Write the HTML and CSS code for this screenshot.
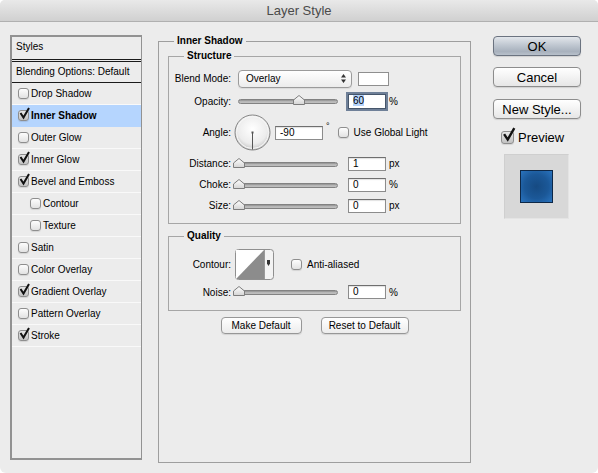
FILE: index.html
```html
<!DOCTYPE html>
<html lang="en">
<head>
    <meta charset="UTF-8">
    <meta name="viewport" content="width=device-width, initial-scale=1.0">
    <title>Layer Style</title>
    <link rel="stylesheet" href="styles.css">
</head>
<body>
    <div class="window">
        <div class="titlebar">Layer Style</div>

        <div class="content">
            <!-- left: list of effects -->
            <div class="styles-list">
                <div class="list-head">Styles</div>
                <div class="list-blend">Blending Options: Default</div>
                <div class="list-item"><span class="cb"></span>Drop Shadow</div>
                <div class="list-item selected"><span class="cb on"><svg class="tick" width="14" height="15" viewBox="0 0 14 15"><path d="M2.5 6 L5.5 10.5 L11 1" fill="none" stroke="#111" stroke-width="2"/></svg></span><b>Inner Shadow</b></div>
                <div class="list-item"><span class="cb"></span>Outer Glow</div>
                <div class="list-item"><span class="cb on"><svg class="tick" width="14" height="15" viewBox="0 0 14 15"><path d="M2.5 6 L5.5 10.5 L11 1" fill="none" stroke="#111" stroke-width="2"/></svg></span>Inner Glow</div>
                <div class="list-item"><span class="cb on"><svg class="tick" width="14" height="15" viewBox="0 0 14 15"><path d="M2.5 6 L5.5 10.5 L11 1" fill="none" stroke="#111" stroke-width="2"/></svg></span>Bevel and Emboss</div>
                <div class="list-item sub"><span class="cb"></span>Contour</div>
                <div class="list-item sub"><span class="cb"></span>Texture</div>
                <div class="list-item"><span class="cb"></span>Satin</div>
                <div class="list-item"><span class="cb"></span>Color Overlay</div>
                <div class="list-item"><span class="cb on"><svg class="tick" width="14" height="15" viewBox="0 0 14 15"><path d="M2.5 6 L5.5 10.5 L11 1" fill="none" stroke="#111" stroke-width="2"/></svg></span>Gradient Overlay</div>
                <div class="list-item"><span class="cb"></span>Pattern Overlay</div>
                <div class="list-item"><span class="cb on"><svg class="tick" width="14" height="15" viewBox="0 0 14 15"><path d="M2.5 6 L5.5 10.5 L11 1" fill="none" stroke="#111" stroke-width="2"/></svg></span>Stroke</div>
            </div>

            <!-- middle: effect settings -->
            <fieldset class="effect-panel">
                <legend>Inner Shadow</legend>

                <fieldset class="group structure">
                    <legend>Structure</legend>

                    <div class="field-row row-blend">
                        <span class="lbl">Blend Mode:</span>
                        <div class="select">
                            <span>Overlay</span>
                            <svg width="5" height="9" viewBox="0 0 5 9"><path d="M0 3.5 L2.5 0 L5 3.5 Z M0 5.5 L2.5 9 L5 5.5 Z" fill="#333"/></svg>
                        </div>
                        <span class="color-swatch"></span>
                    </div>

                    <div class="field-row row-opacity">
                        <span class="lbl">Opacity:</span>
                        <div class="slider">
                            <span class="track"></span>
                            <svg class="thumb" style="left: calc(60% - 5px)" width="12" height="10" viewBox="0 0 12 10">
                                <defs>
                                    <linearGradient id="thumbg" x1="0" y1="0" x2="0" y2="1">
                                        <stop offset="0" stop-color="#ffffff"/>
                                        <stop offset="1" stop-color="#d4d4d4"/>
                                    </linearGradient>
                                </defs>
                                <path d="M0.5 9.5 V5 L6 0.5 L11.5 5 V9.5 Z" fill="url(#thumbg)" stroke="#7d7d7d"/>
                            </svg>
                        </div>
                        <span class="num focus"><span class="sel">60</span></span>
                        <span class="unit">%</span>
                    </div>

                    <div class="field-row row-angle">
                        <span class="lbl">Angle:</span>
                        <svg class="dial" width="37" height="37" viewBox="0 0 37 37">
                            <defs>
                                <radialGradient id="dialg" cx="0.5" cy="0.4" r="0.6">
                                    <stop offset="0" stop-color="#ffffff"/>
                                    <stop offset="0.7" stop-color="#ececec"/>
                                    <stop offset="1" stop-color="#c4c4c4"/>
                                </radialGradient>
                            </defs>
                            <circle cx="18.5" cy="18.5" r="17.5" fill="url(#dialg)" stroke="#858585"/>
                            <circle cx="18.5" cy="18.5" r="16" fill="none" stroke="#f7f7f7"/>
                            <line x1="18.5" y1="18.5" x2="18.5" y2="35.5" stroke="#555"/>
                            <rect x="17.5" y="17.5" width="2" height="2" fill="#555"/>
                        </svg>
                        <span class="num wide">-90</span>
                        <span class="deg">°</span>
                        <span class="cb"></span>
                        <span class="cb-label">Use Global Light</span>
                    </div>

                    <div class="field-row row-slider">
                        <span class="lbl">Distance:</span>
                        <div class="slider">
                            <span class="track"></span>
                            <svg class="thumb" style="left: calc(0% - 5px)" width="12" height="10" viewBox="0 0 12 10"><path d="M0.5 9.5 V5 L6 0.5 L11.5 5 V9.5 Z" fill="url(#thumbg)" stroke="#7d7d7d"/></svg>
                        </div>
                        <span class="num">1</span>
                        <span class="unit">px</span>
                    </div>

                    <div class="field-row row-slider">
                        <span class="lbl">Choke:</span>
                        <div class="slider">
                            <span class="track"></span>
                            <svg class="thumb" style="left: calc(0% - 5px)" width="12" height="10" viewBox="0 0 12 10"><path d="M0.5 9.5 V5 L6 0.5 L11.5 5 V9.5 Z" fill="url(#thumbg)" stroke="#7d7d7d"/></svg>
                        </div>
                        <span class="num">0</span>
                        <span class="unit">%</span>
                    </div>

                    <div class="field-row row-slider">
                        <span class="lbl">Size:</span>
                        <div class="slider">
                            <span class="track"></span>
                            <svg class="thumb" style="left: calc(0% - 5px)" width="12" height="10" viewBox="0 0 12 10"><path d="M0.5 9.5 V5 L6 0.5 L11.5 5 V9.5 Z" fill="url(#thumbg)" stroke="#7d7d7d"/></svg>
                        </div>
                        <span class="num">0</span>
                        <span class="unit">px</span>
                    </div>
                </fieldset>

                <fieldset class="group quality">
                    <legend>Quality</legend>

                    <div class="field-row row-contour">
                        <span class="lbl">Contour:</span>
                        <svg class="contour" width="39" height="31" viewBox="0 0 39 31">
                            <rect x="0.5" y="0.5" width="38" height="30" rx="3" fill="#f3f3f3" stroke="#8f8f8f"/>
                            <rect x="1" y="1" width="28" height="29" fill="#fff"/>
                            <path d="M1 30 L29 1 V30 Z" fill="#8c8c8c"/>
                            <line x1="29.5" y1="1" x2="29.5" y2="30" stroke="#9a9a9a"/>
                            <path d="M32 11 H35 V14.5 L33.5 17 L32 14.5 Z" fill="#333"/>
                        </svg>
                        <span class="cb"></span>
                        <span class="cb-label">Anti-aliased</span>
                    </div>

                    <div class="field-row row-slider row-noise">
                        <span class="lbl">Noise:</span>
                        <div class="slider">
                            <span class="track"></span>
                            <svg class="thumb" style="left: calc(0% - 5px)" width="12" height="10" viewBox="0 0 12 10"><path d="M0.5 9.5 V5 L6 0.5 L11.5 5 V9.5 Z" fill="url(#thumbg)" stroke="#7d7d7d"/></svg>
                        </div>
                        <span class="num">0</span>
                        <span class="unit">%</span>
                    </div>
                </fieldset>

                <div class="defaults">
                    <button class="btn-small make-default">Make Default</button>
                    <button class="btn-small reset-default">Reset to Default</button>
                </div>
            </fieldset>

            <!-- right: dialog buttons and preview -->
            <div class="side">
                <button class="btn default">OK</button>
                <button class="btn">Cancel</button>
                <button class="btn new-style">New Style...</button>
                <div class="preview-check">
                    <span class="cb big on"><svg class="tick" width="17" height="18" viewBox="0 0 14 15"><path d="M2.5 6 L5.5 10.5 L11 1" fill="none" stroke="#111" stroke-width="2"/></svg></span>
                    <span>Preview</span>
                </div>
                <div class="preview-box">
                    <div class="preview-swatch"></div>
                </div>
            </div>
        </div>
    </div>
</body>
</html>
```

FILE: styles.css
```css
* {
    box-sizing: border-box;
}

body {
    margin: 0;
    background-color: #fff;
    font-family: "Liberation Sans", Arial, sans-serif;
    font-size: 10px;
    color: #000;
}

.window {
    width: 598px;
    height: 473px;
    background-color: #ececec;
    border-radius: 5px 5px 6px 6px;
    overflow: hidden;
}

.titlebar {
    height: 22px;
    line-height: 21px;
    text-align: center;
    font-size: 13px;
    color: #4a4a4a;
    background: linear-gradient(#e9e9e9, #d0d0d0);
    border-bottom: 1px solid #b0b0b0;
}

.content {
    display: flex;
    align-items: flex-start;
    padding: 13px 0 0 10px;
}

/* effects list */

.styles-list {
    width: 132px;
    height: 425px;
    border: 2px solid #929292;
    border-right-width: 1px;
    flex-shrink: 0;
}

.list-head {
    height: 25px;
    line-height: 20px;
    padding-left: 4px;
    border-bottom: 3px double #1a1a1a;
}

.list-blend {
    height: 21px;
    line-height: 20px;
    padding-left: 4px;
    border-bottom: 1px solid #1a1a1a;
}

.list-item {
    display: flex;
    align-items: center;
    height: 22px;
    padding-left: 6px;
    border-bottom: 1px solid #f9f9f9;
}

.list-item .cb {
    margin-right: 2px;
}

.list-item.sub {
    padding-left: 18px;
}

.list-item.selected {
    background-color: #b5d5fe;
    border-bottom-color: #b5d5fe;
}

/* checkboxes */

.cb {
    position: relative;
    display: inline-block;
    flex-shrink: 0;
    width: 11px;
    height: 11px;
    border: 1px solid #8e8e8e;
    border-radius: 3px;
    background: linear-gradient(#fdfdfd, #e2e2e2);
    box-shadow: 0 1px 1px rgba(0, 0, 0, 0.1);
}

.cb.on {
    background: linear-gradient(#e6e6e6, #c2c2c2);
}

.cb .tick {
    position: absolute;
    left: -1px;
    top: -4px;
}

.cb.big {
    width: 13px;
    height: 13px;
}

.cb.big .tick {
    top: -5px;
}

.cb-label {
    margin-left: 5px;
}

/* group boxes */

fieldset {
    margin: 0;
    padding: 0;
    min-width: 0;
    border: 1px solid #a3a3a3;
}

legend {
    margin-left: 15px;
    padding: 0 3px;
    line-height: 12px;
    font-weight: bold;
}

.effect-panel {
    margin-left: 16px;
    width: 313px;
    height: 428px;
    flex-shrink: 0;
    border-color: #9e9e9e;
}

.group {
    margin: 3px 9px 0;
    border-color: #a6a6a6;
}

.structure {
    padding: 5px 0 7px;
}

.quality {
    margin-top: 6px;
    padding: 7px 0 7px;
}

.field-row {
    display: flex;
    align-items: center;
}

.field-row .lbl {
    width: 62px;
    margin-right: 7px;
    text-align: right;
    flex-shrink: 0;
}

.row-blend {
    height: 23px;
}

.row-opacity {
    height: 22px;
}

.row-angle {
    height: 41px;
}

.row-slider {
    height: 21px;
}

.row-contour {
    height: 30px;
}

.row-noise {
    margin-top: 2px;
    height: 22px;
}

.select {
    display: flex;
    align-items: center;
    justify-content: space-between;
    width: 114px;
    height: 18px;
    padding: 0 5px 0 7px;
    border: 1px solid #9b9b9b;
    border-radius: 4px;
    background: linear-gradient(#ffffff, #ececec);
    box-shadow: 0 1px 1px rgba(0, 0, 0, 0.08);
}

.color-swatch {
    width: 31px;
    height: 14px;
    margin-left: 6px;
    background-color: #fff;
    border: 1px solid #8f8f8f;
}

.slider {
    position: relative;
    width: 100px;
    height: 14px;
    margin-right: 10px;
    flex-shrink: 0;
}

.track {
    position: absolute;
    left: 0;
    right: 0;
    top: 5px;
    height: 5px;
    border: 1px solid #828282;
    border-radius: 3px;
    background: linear-gradient(#8f8f8f, #c6c6c6 70%, #b2b2b2);
}

.thumb {
    position: absolute;
    top: 1px;
}

.num {
    display: inline-block;
    width: 38px;
    height: 14px;
    padding-left: 4px;
    line-height: 12px;
    background-color: #fff;
    border: 1px solid #8c8c8c;
    border-top-color: #6f6f6f;
    box-shadow: inset 0 1px 1px rgba(0, 0, 0, 0.12);
    flex-shrink: 0;
}

.num.focus {
    height: 15px;
    border-color: #46566b;
    box-shadow: 0 0 0 2px #6f8098;
}

.num.wide {
    width: 48px;
    margin-left: 4px;
}

.sel {
    background-color: #b4d3fb;
}

.unit {
    margin-left: 3px;
}

.dial {
    margin-left: -4px;
    flex-shrink: 0;
}

.deg {
    align-self: flex-start;
    margin: 9px 8px 0 3px;
    line-height: 10px;
    font-size: 9px;
}

.contour {
    margin-left: -3px;
    margin-right: 17px;
    flex-shrink: 0;
}

.defaults {
    display: flex;
    justify-content: center;
    gap: 19px;
    margin-top: 6px;
}

.btn-small {
    height: 17px;
    padding: 0;
    font-family: inherit;
    font-size: 10px;
    color: #000;
    border: 1px solid #979797;
    border-radius: 4px;
    background: linear-gradient(#ffffff, #ececec);
    box-shadow: 0 1px 1px rgba(0, 0, 0, 0.1);
}

.make-default {
    width: 81px;
}

.reset-default {
    width: 88px;
}

/* right column */

.side {
    display: flex;
    flex-direction: column;
    margin-left: 22px;
    width: 88px;
}

.btn {
    width: 88px;
    height: 20px;
    margin-top: 11px;
    padding: 0;
    font-family: inherit;
    font-size: 13px;
    color: #000;
    border: 1px solid #8d8d8d;
    border-radius: 4px;
    background: linear-gradient(#ffffff, #f3f3f3 50%, #e6e6e6);
    box-shadow: 0 1px 1px rgba(0, 0, 0, 0.12);
}

.btn.default {
    margin-top: 1px;
    border-color: #6b7380;
    background: linear-gradient(#e2e6eb, #bcc4ce 50%, #a8b1bd 80%, #b8c0ca);
}

.btn.new-style {
    margin-top: 12px;
}

.preview-check {
    display: flex;
    align-items: center;
    margin: 11px 0 0 8px;
    font-size: 13px;
}

.preview-check .cb {
    margin-right: 4px;
}

.preview-box {
    display: flex;
    align-items: center;
    justify-content: center;
    width: 65px;
    height: 65px;
    margin: 9px 0 0 11px;
    background-color: #d8d8d8;
    border: 1px solid #cfcfcf;
    border-bottom-color: #e4e4e4;
    border-right-color: #e4e4e4;
}

.preview-swatch {
    width: 33px;
    height: 33px;
    border: 1px solid #0d2746;
    background: radial-gradient(ellipse at center, #164a82 0%, #1b5898 55%, #2a74bf 100%);
}
```
